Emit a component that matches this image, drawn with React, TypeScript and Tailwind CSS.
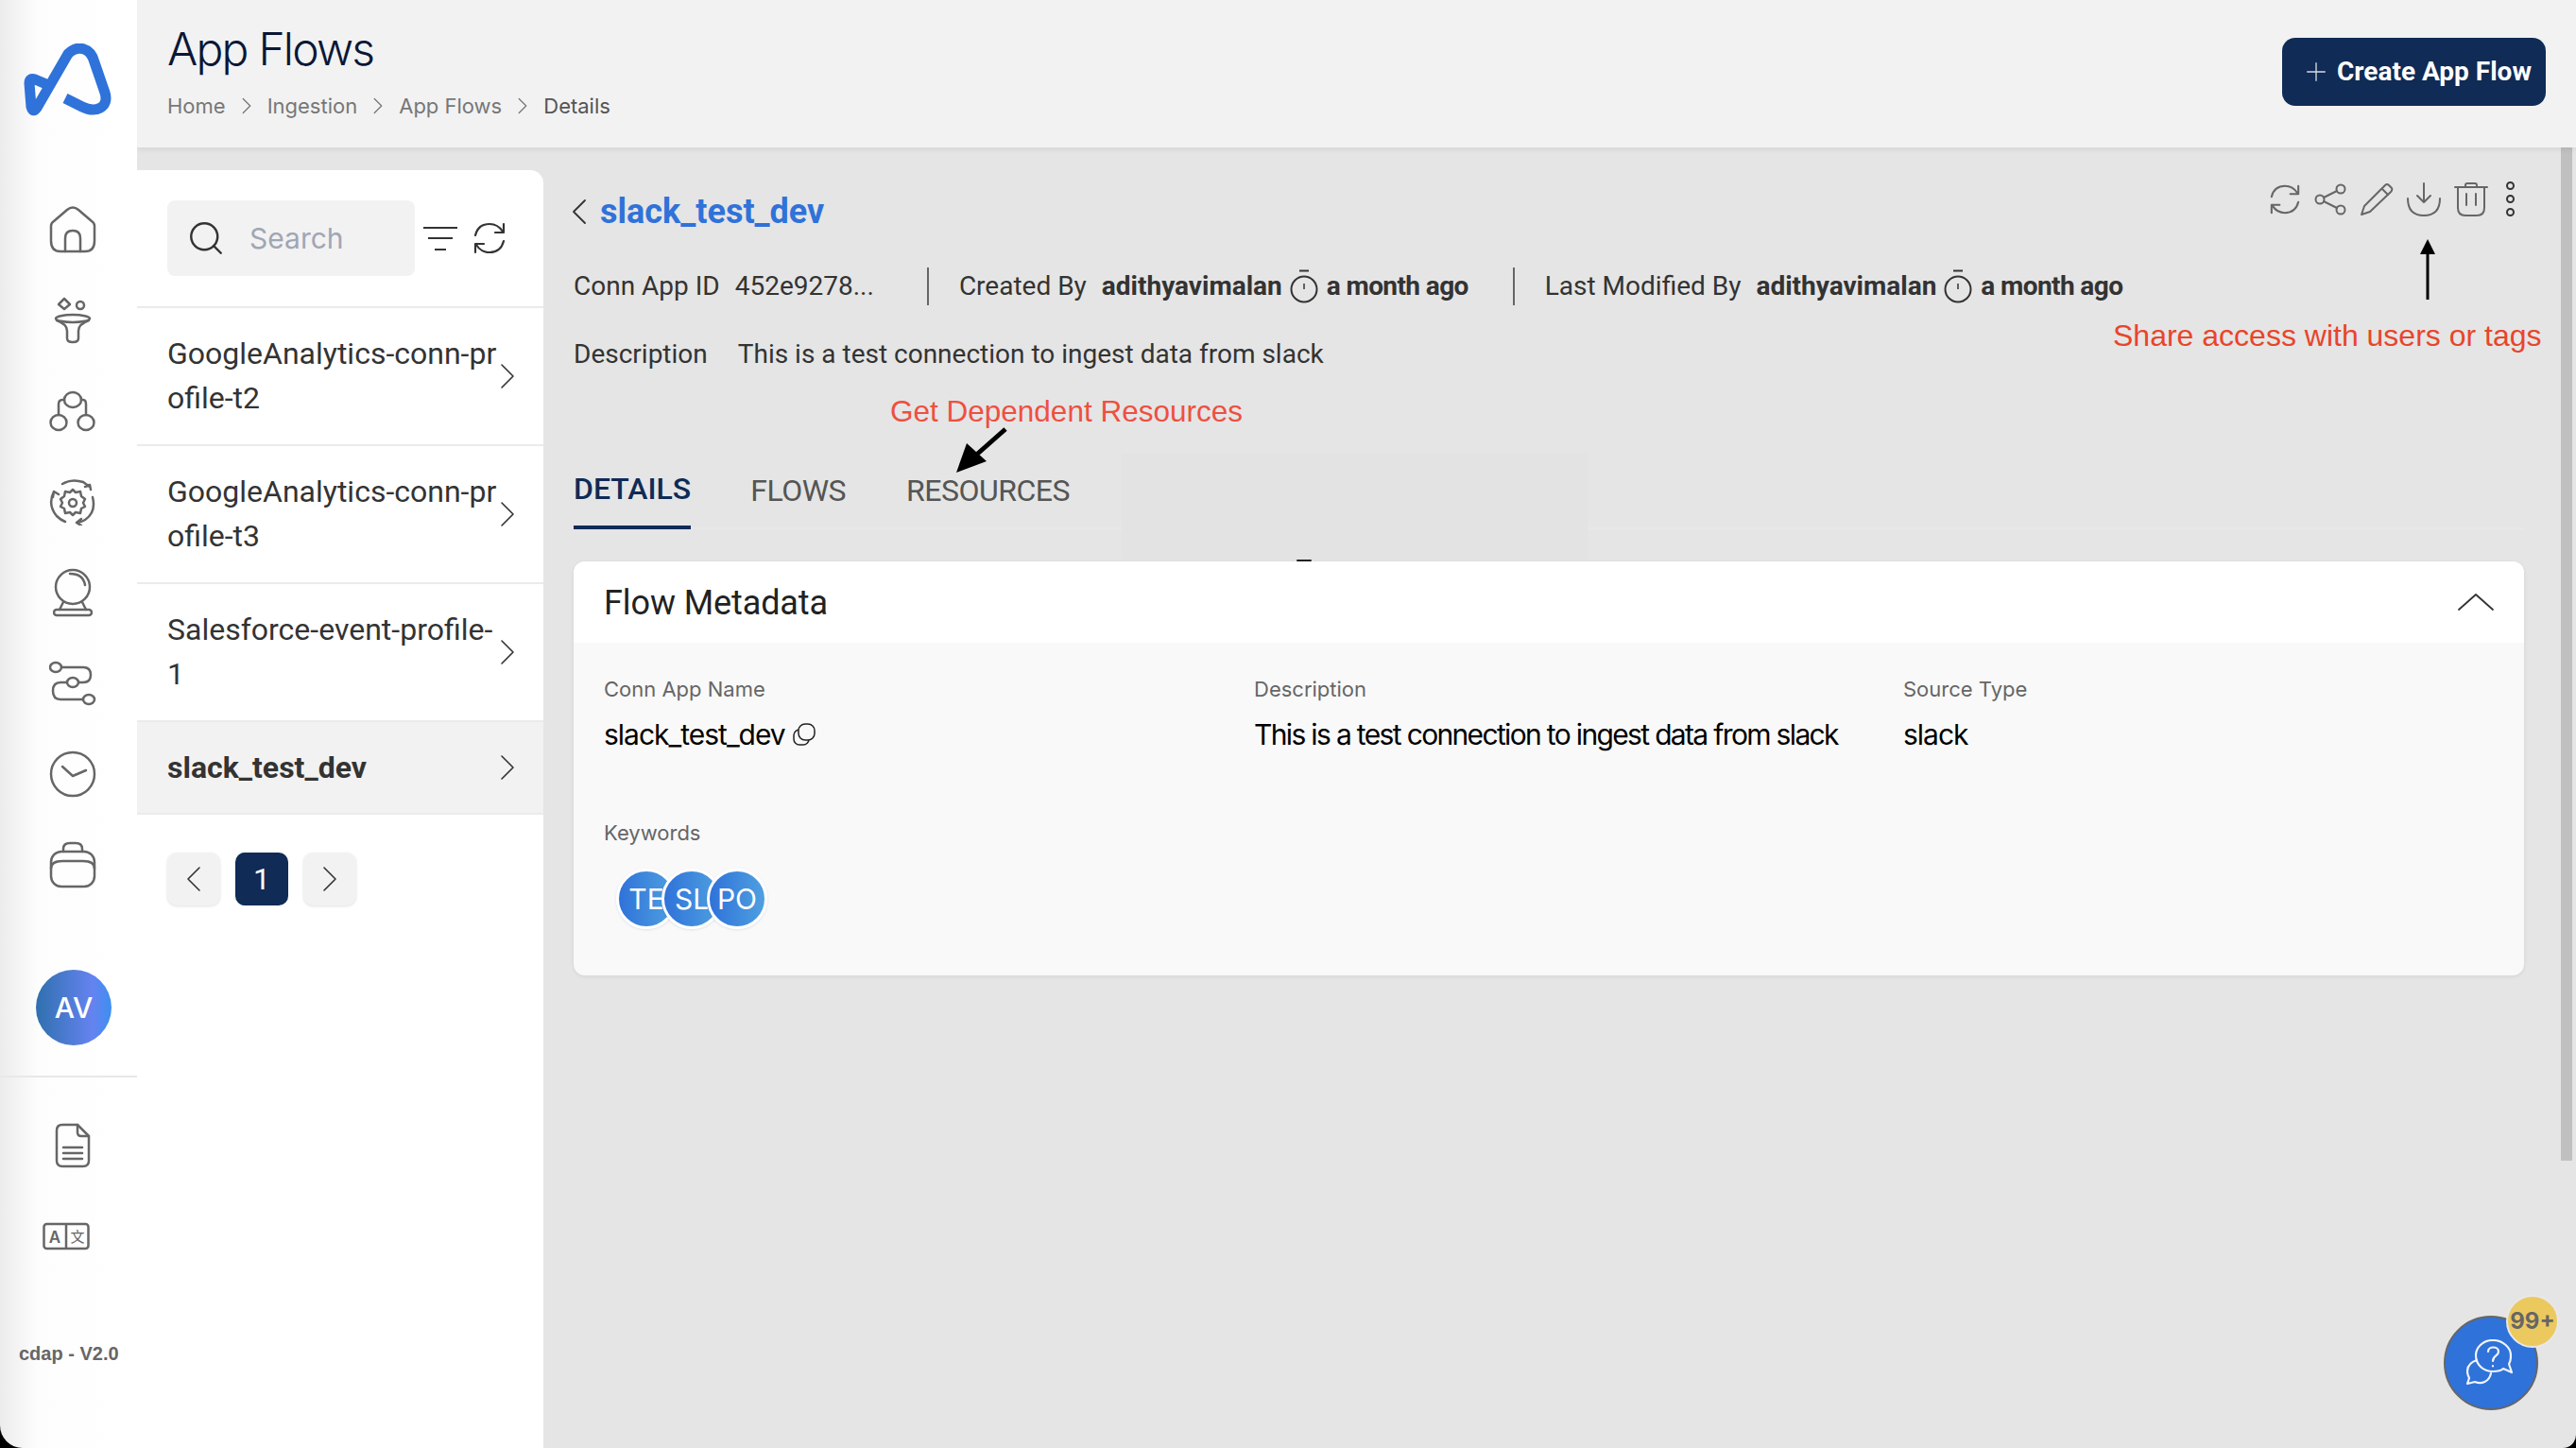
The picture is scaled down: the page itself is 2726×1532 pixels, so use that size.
import { ChevronLeft, ChevronRight, Plus, Search } from "lucide-react";

const items = [
  { lines: ["GoogleAnalytics-conn-pr", "ofile-t2"] },
  { lines: ["GoogleAnalytics-conn-pr", "ofile-t3"] },
  { lines: ["Salesforce-event-profile-", "1"] },
];

function Stroke({ w, h, children, sw = 2.5 }: { w: number; h: number; children: React.ReactNode; sw?: number }) {
  return (
    <svg width={w} height={h} viewBox={`0 0 ${w} ${h}`} fill="none" stroke="currentColor" strokeWidth={sw} strokeLinecap="round" strokeLinejoin="round">
      {children}
    </svg>
  );
}

const navIcons = [
  // home
  <Stroke w={50} h={50} key="home">
    <path d="M2 21Q2 18 5 16L19 4Q25 -1 31 4L45 16Q48 18 48 21V37Q48 48 38 48H12Q2 48 2 37Z" />
    <path d="M17 48V34Q17 26 25 26Q33 26 33 34V48" />
  </Stroke>,
  // funnel
  <Stroke w={40} h={50} key="funnel">
    <path d="M11 2L17 8L11 13L5 8Z" />
    <ellipse cx="28" cy="9" rx="4" ry="4" />
    <ellipse cx="20" cy="23" rx="18" ry="4" />
    <path d="M3 25Q14 29 14 36V44Q14 48 20 48Q26 48 26 44V36Q26 29 37 25" />
  </Stroke>,
  // hierarchy
  <Stroke w={50} h={44} key="tree">
    <ellipse cx="25" cy="10" rx="9" ry="8" />
    <ellipse cx="10" cy="34" rx="8.5" ry="8" />
    <ellipse cx="39" cy="34" rx="8.5" ry="8" />
    <path d="M16 10H14Q10 10 10 15V26M34 10H36Q39 10 39 15V26" />
  </Stroke>,
  // gear with cycle arrows
  <Stroke w={50} h={50} key="gear">
    <path d="M14 6Q24 0 36 4L43 9M44 12L43 7L38 9" />
    <path d="M5 14Q-2 28 8 40Q12 44 17 46M4 20L5 14L10 17" />
    <path d="M46 20Q50 36 38 44Q35 46 30 47M34 43L29 47L34 50" />
    <path d="M25 12L28 15L33 14L34 19L38 22L36 26L38 30L34 32L33 37L28 36L25 39L22 36L17 37L16 32L12 30L14 26L12 22L16 19L17 14L22 15Z" />
    <circle cx="25" cy="26" r="4" />
  </Stroke>,
  // crystal ball
  <Stroke w={42} h={52} key="ball">
    <circle cx="21" cy="20" r="18" />
    <path d="M18 6Q32 6 34 18" />
    <path d="M11 36L7 44M31 36L35 44" />
    <rect x="1" y="44" width="40" height="6" rx="3" />
  </Stroke>,
  // route
  <Stroke w={50} h={48} key="route">
    <ellipse cx="7" cy="7" rx="6" ry="5" />
    <ellipse cx="25" cy="23" rx="6" ry="5" />
    <ellipse cx="42" cy="41" rx="6" ry="5" />
    <path d="M13 7H36Q44 7 44 15Q44 23 36 23H31M19 23H12Q4 23 4 32Q4 41 12 41H36" />
  </Stroke>,
  // clock
  <Stroke w={50} h={50} key="clock">
    <circle cx="25" cy="25" r="23" />
    <path d="M14 17L25 27L39 21" />
  </Stroke>,
  // case
  <Stroke w={50} h={50} key="case">
    <path d="M15 11V8Q15 2 22 2H28Q35 2 35 8V11" />
    <rect x="2" y="11" width="46" height="37" rx="11" />
    <path d="M2 29Q2 21 14 21H36Q48 21 48 29" />
  </Stroke>,
];

function Icon32({ children }: { children: React.ReactNode }) {
  return (
    <svg width="36" height="36" viewBox="0 0 36 36" fill="none" stroke="currentColor" strokeWidth="2" strokeLinecap="round" strokeLinejoin="round">
      {children}
    </svg>
  );
}

function Timer() {
  return (
    <svg width="30" height="36" viewBox="0 0 30 36" fill="none" stroke="#333" strokeWidth="2" className="shrink-0">
      <path d="M10 1.5H20" />
      <circle cx="15" cy="21" r="13.5" />
      <path d="M15 15V21" strokeWidth="1.5" />
    </svg>
  );
}

function Refresh({ size = 36 }: { size?: number }) {
  return (
    <svg width={size} height={size} viewBox="0 0 36 36" fill="none" stroke="currentColor" strokeWidth="2.2" strokeLinecap="round" strokeLinejoin="round">
      <path d="M3 15Q6 3 18 3Q27 3 32 11" />
      <path d="M33 3V12H24" />
      <path d="M33 21Q30 33 18 33Q9 33 4 25" />
      <path d="M3 33V24H12" />
    </svg>
  );
}

function Crumb({ text, last }: { text: string; last?: boolean }) {
  return (
    <>
      <span className={last ? "text-[#555]" : "text-[#777]"}>{text}</span>
      {!last && <ChevronRight className="w-[30px] h-[30px] text-[#777] mx-[7px]" strokeWidth={1} />}
    </>
  );
}

export default function App() {
  return (
    <div className="relative w-[2726px] h-[1532px] flex overflow-hidden bg-black font-[Roboto,sans-serif]">
      {/* Sidebar */}
      <aside className="w-[145px] h-full shrink-0 flex flex-col rounded-bl-[24px] bg-[linear-gradient(90deg,#ececec,#fdfdfd_28%,#ffffff)] text-[#666]">
        <div className="h-[195px] pt-[46px] pl-[25px]">
          <svg width="94" height="80" viewBox="0 0 94 80" fill="none" stroke="#2f72d9" strokeWidth="11" strokeLinejoin="round" strokeLinecap="butt">
            <path d="M44 58L62 67C76 74 91 68 86 52L75 20C71 4 57 1 47 11L14 68Q10 74 8 67L6 42Q6 36 12 38L31 46" />
          </svg>
        </div>
        <nav className="flex flex-col">
          {navIcons.map((icon, i) => (
            <div key={i} className="h-[96px] flex items-center justify-center pl-[9px]">
              {icon}
            </div>
          ))}
        </nav>
        <div className="mt-[63px] ml-[38px] w-[80px] h-[80px] rounded-full flex items-center justify-center bg-[linear-gradient(90deg,#2f70ae,#6583f0_75%,#3d8ff0)] text-white text-[30px] font-medium font-[Inter,sans-serif]">
          AV
        </div>
        <div className="mt-[32px] h-[2px] bg-[#e8e8e8]" />
        <div className="mt-[24px] h-[96px] flex items-center justify-center pl-[9px]">
          <Stroke w={38} h={48}>
            <path d="M24 2H8Q2 2 2 8V40Q2 46 8 46H30Q36 46 36 40V14L24 2Z" />
            <path d="M24 2V10Q24 14 28 14H36" />
            <path d="M9 26H29M9 32H29M9 38H29" />
          </Stroke>
        </div>
        <div className="h-[95px] flex items-center pl-[45px]">
          <svg width="50" height="30" viewBox="0 0 50 30" fill="none" stroke="currentColor" strokeWidth="2.5">
            <rect x="1.5" y="2" width="47" height="26" rx="3" />
            <path d="M25 2V28" />
            <text x="13" y="22" textAnchor="middle" fontSize="17" fontFamily="Inter" fontWeight="600" fill="currentColor" stroke="none">A</text>
            <text x="37" y="21" textAnchor="middle" fontSize="15" fontFamily="Noto Sans CJK SC" fill="currentColor" stroke="none">文</text>
          </svg>
        </div>
        <div className="mt-[65px] pl-[20px] text-[20px] leading-[24px] font-bold font-['Liberation_Sans',sans-serif] whitespace-nowrap">cdap - V2.0</div>
      </aside>

      <div className="flex-1 flex flex-col h-full rounded-br-[14px] overflow-hidden bg-[#e5e5e5]">
        {/* Header */}
        <header className="h-[156px] shrink-0 bg-[#f2f2f2] shadow-[0_2px_6px_rgba(0,0,0,0.08)] relative z-10 flex items-start justify-between pl-[32px] pr-[32px]">
          <div className="font-[Inter,sans-serif]">
            <h1 className="mt-[21px] text-[48px] leading-[62px] font-light text-[#0b1736] tracking-[-1.8px]">App Flows</h1>
            <div className="mt-[13px] flex items-center text-[22px] leading-[32px]">
              <Crumb text="Home" />
              <Crumb text="Ingestion" />
              <Crumb text="App Flows" />
              <Crumb text="Details" last />
            </div>
          </div>
          <button className="mt-[40px] w-[279px] h-[72px] rounded-[14px] bg-[#0f2b56] text-white flex items-center pl-[20px] gap-[6px] text-[28px] font-bold">
            <Plus className="w-[32px] h-[32px] text-[#d8dce4]" strokeWidth={1} />
            Create App Flow
          </button>
        </header>

        <div className="flex-1 flex pt-[24px] min-h-0">
          {/* List panel */}
          <section className="w-[430px] shrink-0 bg-white rounded-tr-[14px] flex flex-col">
            <div className="h-[144px] shrink-0 pl-[32px] pt-[32px] flex items-start">
              <div className="w-[262px] h-[80px] rounded-[8px] bg-[#f2f2f2] flex items-center pl-[20px]">
                <Search className="w-[42px] h-[42px] text-[#333]" strokeWidth={1.4} />
                <span className="ml-[25px] text-[30px] text-[#a0a6b4] font-[Inter,sans-serif]">Search</span>
              </div>
              <svg width="36" height="26" viewBox="0 0 36 26" fill="none" stroke="#333" strokeWidth="2" className="ml-[9px] mt-[28px]">
                <path d="M0 1H36M5 12H31M12 24H24" />
              </svg>
              <div className="ml-[16px] mt-[22px] text-[#333]">
                <Refresh size={36} />
              </div>
            </div>
            {items.map((item) => (
              <div key={item.lines[0]} className="h-[146px] shrink-0 border-t-2 border-[#ebebeb] pl-[32px] pr-[14px] flex items-center justify-between text-[32px] leading-[47px] text-[#333]">
                <div>
                  {item.lines.map((l) => (
                    <div key={l} className="whitespace-nowrap">{l}</div>
                  ))}
                </div>
                <ChevronRight className="w-[48px] h-[48px] -ml-[20px] text-[#333] shrink-0" strokeWidth={0.8} />
              </div>
            ))}
            <div className="h-[100px] shrink-0 border-y-2 border-[#ebebeb] bg-[#f2f2f2] pl-[32px] pr-[14px] flex items-center justify-between text-[32px] font-bold text-[#333]">
              slack_test_dev
              <ChevronRight className="w-[48px] h-[48px] text-[#333]" strokeWidth={0.8} />
            </div>
            <div className="mt-[40px] pl-[32px] flex gap-[16px]">
              <div className="w-[56px] h-[56px] rounded-[10px] bg-[#f2f2f2] shadow-[0_1px_3px_rgba(0,0,0,0.12)] flex items-center justify-center">
                <ChevronLeft className="w-[48px] h-[48px] text-[#333]" strokeWidth={0.8} />
              </div>
              <div className="w-[56px] h-[56px] rounded-[10px] bg-[#0f2b56] text-white text-[32px] flex items-center justify-center">1</div>
              <div className="w-[56px] h-[56px] rounded-[10px] bg-[#f2f2f2] shadow-[0_1px_3px_rgba(0,0,0,0.12)] flex items-center justify-center">
                <ChevronRight className="w-[48px] h-[48px] text-[#333]" strokeWidth={0.8} />
              </div>
            </div>
          </section>

          {/* Details */}
          <main className="flex-1 pl-[32px] pr-[55px] flex flex-col min-w-0">
            <div className="h-[88px] shrink-0 flex items-start justify-between">
              <div className="h-[88px] flex items-center">
                <ChevronLeft className="w-[48px] h-[48px] text-[#333] -ml-[18px]" strokeWidth={0.9} />
                <span className="-ml-[2px] text-[36px] font-bold text-[#2f72d9]">slack_test_dev</span>
              </div>
              <div className="mt-[12px] flex items-center text-[#666] mr-[8px]">
                <Refresh size={34} />
                <div className="ml-[14px]">
                  <Icon32>
                    <circle cx="6" cy="18" r="4.5" />
                    <circle cx="28" cy="7" r="4.5" />
                    <circle cx="28" cy="29" r="4.5" />
                    <path d="M10 16L24 9M10 20L24 27" />
                  </Icon32>
                </div>
                <div className="ml-[12px]">
                  <Icon32>
                    <path d="M2 34L5 25L27 3Q29 1 31 3L34 6Q35 8 33 10L11 31Z" />
                    <path d="M24 7L30 13" />
                  </Icon32>
                </div>
                <div className="ml-[14px]">
                  <Icon32>
                    <path d="M18 1V20M11 14L18 21L25 14" />
                    <path d="M1 17Q1 35 18 35Q35 35 35 17" />
                  </Icon32>
                </div>
                <div className="ml-[14px]">
                  <Icon32>
                    <path d="M1 5H35" />
                    <path d="M12 5V3Q12 1 14 1H22Q24 1 24 3V5" />
                    <path d="M4 5V27Q4 35 12 35H24Q32 35 32 27V5" />
                    <path d="M13 12V24M23 12V24" />
                  </Icon32>
                </div>
                <div className="ml-[19px] mr-[2px] flex flex-col gap-[5px] w-[9px]">
                  <span className="block w-[9px] h-[9px] rounded-full border-2 border-[#333]" />
                  <span className="block w-[9px] h-[9px] rounded-full border-2 border-[#333]" />
                  <span className="block w-[9px] h-[9px] rounded-full border-2 border-[#333]" />
                </div>
              </div>
            </div>

            <div className="h-[68px] shrink-0 pt-[2px] flex items-center text-[28px] text-[#333] whitespace-nowrap">
              <span>Conn App ID</span>
              <span className="ml-[16px]">452e9278...</span>
              <span className="ml-[56px] w-[2px] h-[40px] bg-[#666]" />
              <span className="ml-[32px]">Created By</span>
              <span className="ml-[16px] font-bold">adithyavimalan</span>
              <span className="ml-[8px]"><Timer /></span>
              <span className="ml-[9px] font-bold tracking-[-0.6px]">a month ago</span>
              <span className="ml-[47px] w-[2px] h-[40px] bg-[#666]" />
              <span className="ml-[32px]">Last Modified By</span>
              <span className="ml-[16px] font-bold">adithyavimalan</span>
              <span className="ml-[8px]"><Timer /></span>
              <span className="ml-[9px] font-bold tracking-[-0.6px]">a month ago</span>
            </div>

            <div className="h-[78px] shrink-0 flex items-center text-[28px] text-[#333]">
              <span>Description</span>
              <span className="ml-[32px]">This is a test connection to ingest data from slack</span>
            </div>

            <div className="h-[146px] shrink-0 flex items-end gap-[63px] text-[32px] border-b-2 border-[#e8e8e8]">
              <div className="pb-[20px] border-b-4 -mb-[2px] border-[#0f2b56] text-[#0f2b56] font-medium leading-[38px]">DETAILS</div>
              <div className="pb-[20px] text-[#555] leading-[38px] tracking-[-0.5px]">FLOWS</div>
              <div className="pb-[20px] text-[#555] leading-[38px] tracking-[-0.5px] ml-[1px]">RESOURCES</div>
            </div>

            <div className="mt-[34px] w-full rounded-[12px] overflow-hidden bg-[#f9f9f9] shadow-[0_1px_4px_rgba(0,0,0,0.08)]">
              <div className="h-[86px] bg-white px-[32px] flex items-center justify-between">
                <span className="text-[36px] text-[#222] pt-[2px] tracking-[-0.1px]">Flow Metadata</span>
                <svg width="38" height="20" viewBox="0 0 38 20" fill="none" stroke="#333" strokeWidth="1.8" strokeLinecap="round" strokeLinejoin="round">
                  <path d="M1 18L19 2L37 18" />
                </svg>
              </div>
              <div className="h-[352px] px-[32px] pt-[34px] font-[Inter,sans-serif]">
                <div className="grid grid-cols-[688px_687px_1fr]">
                  <div>
                    <div className="text-[22px] leading-[30px] text-[#666]">Conn App Name</div>
                    <div className="mt-[13px] flex items-center text-[30px] leading-[40px] text-black tracking-[-1px]">
                      slack_test_dev
                      <svg width="24" height="24" viewBox="0 0 24 24" fill="none" stroke="#222" strokeWidth="1.5" className="ml-[8px]">
                        <rect x="1" y="7" width="16" height="16" rx="6" />
                        <rect x="6" y="1" width="17" height="17" rx="7" fill="#f9f9f9" />
                      </svg>
                    </div>
                  </div>
                  <div>
                    <div className="text-[22px] leading-[30px] text-[#666]">Description</div>
                    <div className="mt-[13px] text-[30px] leading-[40px] text-black tracking-[-1.66px] whitespace-nowrap">This is a test connection to ingest data from slack</div>
                  </div>
                  <div>
                    <div className="text-[22px] leading-[30px] text-[#666]">Source Type</div>
                    <div className="mt-[13px] text-[30px] leading-[40px] text-black tracking-[-1px]">slack</div>
                  </div>
                </div>
                <div className="mt-[69px] text-[22px] leading-[30px] text-[#666]">Keywords</div>
                <div className="mt-[23px] pl-[13px] flex">
                  {["TE", "SL", "PO"].map((k, i) => (
                    <div key={k} className={`w-[64px] h-[64px] shrink-0 rounded-full border-[3px] border-white bg-[linear-gradient(90deg,#2f72d9,#4fa0e0)] shadow-[0_1px_3px_rgba(0,0,0,0.1)] text-white text-[30px] flex items-center justify-center overflow-hidden ${i > 0 ? "-ml-[16px]" : ""}`}>
                      {k}
                    </div>
                  ))}
                </div>
              </div>
            </div>
          </main>
        </div>
      </div>

      {/* Annotations laid over the page */}
      <div className="absolute left-[942px] top-[416px] text-[31.5px] leading-[38px] text-[#ee5040] font-['Liberation_Sans',sans-serif] whitespace-nowrap">Get Dependent Resources</div>
      <svg className="absolute left-[1010px] top-[450px]" width="60" height="52" viewBox="0 0 60 52">
        <path d="M54 4L20 34" stroke="#000" strokeWidth="5" />
        <path d="M2 50L13 19L34 38Z" fill="#000" />
      </svg>
      <div className="absolute left-[2236px] top-[336px] text-[32px] leading-[38px] text-[#e8452a] font-['Liberation_Sans',sans-serif] whitespace-nowrap">Share access with users or tags</div>
      <svg className="absolute left-[2554px] top-[252px]" width="30" height="66" viewBox="0 0 30 66">
        <path d="M15 14V65" stroke="#000" strokeWidth="3" />
        <path d="M15 1L23 17H7Z" fill="#000" />
      </svg>
      <div className="absolute left-[1187px] top-[480px] w-[493px] h-[112px] bg-[#e3e3e3]" />
      <div className="absolute left-[1372px] top-[592px] w-[16px] h-[2px] rounded-full bg-[#222]" />

      {/* Scrollbar */}
      <div className="absolute left-[2710px] top-[156px] w-[12px] h-[1072px] bg-[#c0c0c0]" />

      {/* Chat button */}
      <div className="absolute left-[2586px] top-[1392px] w-[100px] h-[100px] rounded-full border-2 border-[#666] bg-[#2f72d9] flex items-center justify-center">
        <svg width="52" height="50" viewBox="0 0 52 50" fill="none" stroke="#f0f4fa" strokeWidth="2.2" strokeLinejoin="round" strokeLinecap="round">
          <path d="M28 1C17 1 10 9 10 17C10 27 18 34 28 34C33 34 37 33 39 31L48 35L45 26C47 23 47 20 47 17C47 9 39 1 28 1Z" />
          <path d="M11 22C5 24 1 28 1 34C1 37 2 39 3 41L1 47L9 45C16 48 24 45 26 36" />
          <path d="M23 13C23 7 34 7 34 13C34 18 28 17 28 23" />
          <path d="M28 28V28.5" />
        </svg>
      </div>
      <div className="absolute left-[2652px] top-[1370px] w-[56px] h-[56px] rounded-full border-2 border-[#e8e8e8] bg-[#ecc95f] flex items-center justify-center text-[#666] text-[24px] font-bold font-[Inter,sans-serif]">99+</div>
    </div>
  );
}
